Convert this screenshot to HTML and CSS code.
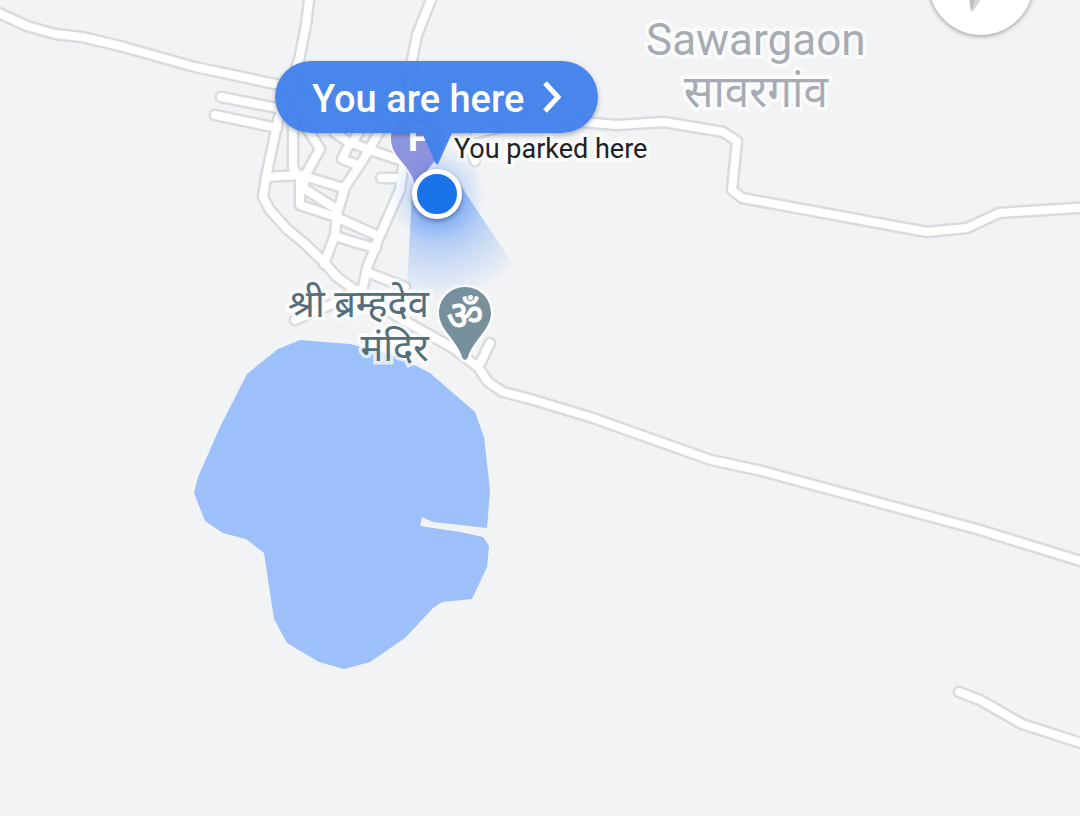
FILE: index.html
```html
<!DOCTYPE html>
<html lang="en">
<head>
<meta charset="utf-8">
<meta name="viewport" content="width=device-width, initial-scale=1">
<title>Map – You are here</title>
<link rel="stylesheet" href="styles.css">
</head>
<body>
<main class="map">
  <svg class="terrain" aria-hidden="true">
    <defs>
      <g id="roads">
        <path d="M-8 10 27 26 55 34 82 37 120 46 195 67 275 84 330 92 430 133"/>
        <path d="M476 133 520 123 570 121 617 125 664 122 723 132 737 141 732 190 742 198 927 232 967 228 999 213 1090 207"/>
        <path d="M310 -8 306 25 299 60 278 120 266 177 263 197 270 210 287 229 304 243 322 260 337 277 355 290 403 320 453 348 478 367 488 382 503 392 530 399 590 417 711 460 762 471 980 530 1090 564"/>
        <path d="M434 -8 417 35 412 60 404 160 400 190 388 217 378 240 367 268 362 292"/>
        <path d="M959 692 980 700 1022 724 1090 746"/>
        <path d="M221 97 282 109"/>
        <path d="M215 115 277 128"/>
        <path d="M266 177 300 175 327 183 343 188"/>
        <path d="M293 110V168L300 178V205L336 217 378 236"/>
        <path d="M305 125 320 149 306 174 303 188 335 208"/>
        <path d="M383 125 363 160 345 187 337 214 335 235 324 264"/>
        <path d="M335 133 350 143 342 159 358 165M360 130 352 143 370 150 400 160"/>
        <path d="M381 178H402"/>
        <path d="M335 236 357 243 376 248"/>
        <path d="M369 273 405 287"/>
        <path d="M295 320 337 302 358 290"/>
        <path d="M490 343 480 364"/>
        <path d="M468 145 475 161"/>
      </g>
      <radialGradient id="beamFade" gradientUnits="userSpaceOnUse" cx="437" cy="194" r="106">
        <stop offset="0" stop-color="#4285f4" stop-opacity=".7"/>
        <stop offset=".3" stop-color="#4285f4" stop-opacity=".46"/>
        <stop offset=".6" stop-color="#4285f4" stop-opacity=".24"/>
        <stop offset="1" stop-color="#4285f4" stop-opacity="0"/>
      </radialGradient>
      <radialGradient id="halo">
        <stop offset=".45" stop-color="#4285f4" stop-opacity=".25"/>
        <stop offset="1" stop-color="#4285f4" stop-opacity="0"/>
      </radialGradient>
      <linearGradient id="parkFill" x1="0" y1="0" x2="1" y2="1">
        <stop offset=".3" stop-color="#8c96df"/>
        <stop offset="1" stop-color="#9b8fd6"/>
      </linearGradient>
    </defs>
    <path class="lake" d="M300 340 350 344 395 355 430 373 475 412 484 437 490 490 487 528 433 522 422 517 420 526 460 532 483 537 489 546 487 567 472 599 442 602 433 608 405 638 370 662 344 669 319 662 287 643 274 619 264 553 246 539 223 533 205 521 194 493 198 477 221 425 247 374 278 349Z"/>
    <use class="road-edge" href="#roads"/>
    <use class="road-fill" href="#roads"/>
  </svg>

  <p class="label town"><span>Sawargaon</span><span lang="mr">सावरगांव</span></p>
  <p class="label temple" lang="mr">श्री ब्रम्हदेव<br>मंदिर</p>
  <p class="label parked">You parked here</p>

  <svg class="terrain" aria-hidden="true">
    <path class="temple-pin" d="M465 287c-14.500 0-26 11.500-26 26 0 8 4 14 9 21 7 9 12 16 14 23q1 3 3 3t3-3c2-7 7-14 14-23 5-7 9-13 9-21 0-14.500-11.500-26-26-26Z"/>
    <text class="om" x="465" y="329">ॐ</text>
    <path class="park-pin" fill="url(#parkFill)" d="M418 112c-15 0-27 12-27 27 0 8 4 15 10 22 7 8 12 15 14 24h6c2-9 7-16 14-24 6-7 10-14 10-22 0-15-12-27-27-27Z"/>
    <text class="park-letter" x="420" y="151">P</text>
    <circle cx="437" cy="194" r="48" fill="url(#halo)"/>
    <path fill="url(#beamFade)" d="M437 194 412 194 406 305H540L461 186Z"/>
  </svg>

  <button class="callout" type="button">
    <span>You are here</span>
    <svg class="chevron" viewBox="0 0 18 34" aria-hidden="true"><path d="M2 3 15 17 2 31"/></svg>
    <svg class="pointer" viewBox="0 0 30 33" aria-hidden="true"><path d="M0 0H30L17 29Q15 34 13 29Z"/></svg>
  </button>
  <span class="position" role="img" aria-label="Current position"></span>

  <button class="compass" type="button" aria-label="Reset map to north">
    <svg viewBox="0 0 104 104" aria-hidden="true">
      <path fill="#e25241" d="M52 52 60 24 66 56Z"/>
      <path fill="#bfc1c8" d="M37 48 52 52 43 80H42Z"/>
      <path fill="#d5d6dd" d="M50 52 61 56 44 80H43Z"/>
    </svg>
  </button>
</main>
</body>
</html>
```
FILE: styles.css
```css
* {
  box-sizing: border-box;
}

body {
  margin: 0;
  font-family: Roboto, "Noto Sans Devanagari", "Noto Sans", sans-serif;
}

.map {
  position: relative;
  min-height: 100vh;
  overflow: hidden;
  background: #f1f3f5;
}

.terrain {
  position: absolute;
  inset: 0;
  width: 100%;
  height: 100%;
}

.lake {
  fill: #9dc0fa;
}

.road-edge,
.road-fill {
  fill: none;
  stroke-linecap: round;
  stroke-linejoin: round;
}

.road-edge {
  stroke: #d9dbde;
  stroke-width: 13px;
}

.road-fill {
  stroke: #fff;
  stroke-width: 8px;
}

.label {
  position: absolute;
  margin: 0;
  white-space: nowrap;
  paint-order: stroke fill;
  -webkit-text-stroke: 7px rgb(255 255 255 / 70%);
}

.town {
  top: 14px;
  left: 646px;
  display: grid;
  justify-items: center;
  font-size: 44px;
  line-height: 52px;
  color: #a6abb4;
}

.temple {
  top: 282px;
  left: 288px;
  font-size: 38px;
  line-height: 44px;
  text-align: right;
  color: #546e7a;
}

.parked {
  top: 132px;
  left: 454px;
  font-size: 27px;
  line-height: 34px;
  color: #202124;
}

.temple-pin {
  fill: #78909c;
  stroke: #fff;
  stroke-width: 5px;
  paint-order: stroke;
}

.park-pin {
  stroke: rgb(255 255 255 / 70%);
  stroke-width: 4px;
  paint-order: stroke;
}

.om {
  fill: #fff;
  stroke: #fff;
  stroke-width: 1px;
  font-size: 40px;
  text-anchor: middle;
}

.park-letter {
  fill: #fff;
  font-size: 38px;
  font-weight: 700;
  text-anchor: middle;
}

.callout {
  position: absolute;
  top: 61px;
  left: 275px;
  display: flex;
  align-items: center;
  gap: 19px;
  height: 72px;
  padding: 0 37px;
  border: 0;
  border-radius: 36px;
  background: rgb(66 129 234 / 96%);
  box-shadow: 0 2px 5px rgb(0 0 0 / 30%);
  color: #fff;
  font: 500 38px/44px Roboto, sans-serif;
  white-space: nowrap;
}

.callout span {
  padding-top: 4px;
}

.chevron {
  width: 18px;
  height: 34px;
  fill: none;
  stroke: #fff;
  stroke-width: 5px;
}

.pointer {
  position: absolute;
  top: 72px;
  left: 147px;
  width: 30px;
  height: 33px;
  fill: rgb(66 129 234 / 96%);
}

.position {
  position: absolute;
  top: 169px;
  left: 412px;
  width: 50px;
  height: 50px;
  border: 5px solid #fff;
  border-radius: 50%;
  background: #1a73e8;
  box-shadow: 0 2px 5px rgb(0 0 0 / 35%);
}

.compass {
  position: absolute;
  top: -69px;
  left: 929px;
  width: 104px;
  height: 104px;
  padding: 0;
  border: 0;
  border-radius: 50%;
  background: #fff;
  box-shadow: 0 1px 5px rgb(0 0 0 / 40%);
}
```
